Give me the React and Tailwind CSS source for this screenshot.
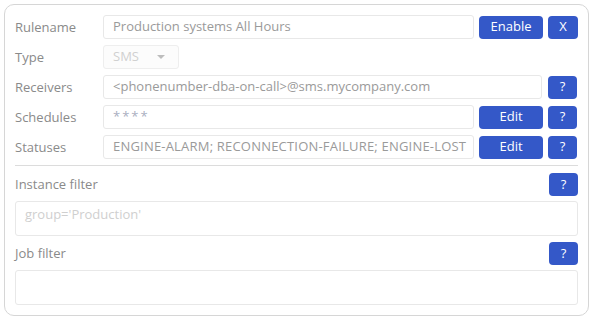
import React from "react";

const font = { fontFamily: '"Open Sans", "Liberation Sans", sans-serif' };

function Btn({ children, className = "" }) {
  return (
    <button
      className={
        "flex h-[23px] shrink-0 items-center justify-center rounded-[4px] bg-[#3458c8] text-[13px] text-white " +
        className
      }
    >
      {children}
    </button>
  );
}

function Input({ children, className = "" }) {
  return (
    <div
      className={
        "flex h-[24px] min-w-0 items-center overflow-hidden whitespace-nowrap rounded-[3px] border border-[#e8e8e8] px-[9px] text-[13px] text-[#9a9a9a] " +
        className
      }
    >
      {children}
    </div>
  );
}

function Label({ children }) {
  return <div className="w-[88px] shrink-0 pt-px text-[13px] text-[#8a8a8a]">{children}</div>;
}

export default function App() {
  return (
    <div className="h-[324px] w-[596px] bg-white p-[4px]" style={font}>
      <div className="w-[585px] rounded-[10px] border border-[#d6d6d6] p-[10px]">
        <div className="flex flex-col gap-[6px]">
          <div className="flex items-center">
            <Label>Rulename</Label>
            <Input className="w-[371px]">Production systems All Hours</Input>
            <Btn className="ml-[5px] w-[64px]">Enable</Btn>
            <Btn className="ml-[5px] w-[30px]">X</Btn>
          </div>
          <div className="flex items-center">
            <Label>Type</Label>
            <div className="flex h-[24px] w-[76px] items-center justify-between rounded-[3px] border border-[#eeeeee] bg-[#fcfcfc] pl-[9px] pr-[13px] text-[13px] text-[#d0d0d0]">
              <span>SMS</span>
              <span className="h-0 w-0 border-x-[4px] border-t-[4px] border-x-transparent border-t-[#bdbdbd]" />
            </div>
          </div>
          <div className="flex items-center">
            <Label>Receivers</Label>
            <Input className="w-[439px]">&lt;phonenumber-dba-on-call&gt;@sms.mycompany.com</Input>
            <Btn className="ml-[6px] w-[29px]">?</Btn>
          </div>
          <div className="flex items-center">
            <Label>Schedules</Label>
            <Input className="w-[371px] text-[11px] tracking-[2px] text-[#a9aec0]">****</Input>
            <Btn className="ml-[5px] w-[64px]">Edit</Btn>
            <Btn className="ml-[5px] w-[29px]">?</Btn>
          </div>
          <div className="flex items-center">
            <Label>Statuses</Label>
            <Input className="w-[371px] tracking-[0.2px]">ENGINE-ALARM; RECONNECTION-FAILURE; ENGINE-LOST</Input>
            <Btn className="ml-[5px] w-[64px]">Edit</Btn>
            <Btn className="ml-[5px] w-[29px]">?</Btn>
          </div>
        </div>
        <div className="mt-[6px] h-px w-[563px] bg-[#dcdcdc]" />
        <div className="mt-[7px] flex w-[563px] items-center justify-between">
          <div className="text-[13px] text-[#8a8a8a]">Instance filter</div>
          <Btn className="w-[29px]">?</Btn>
        </div>
        <div className="mt-[5px] h-[35px] w-[563px] rounded-[3px] border border-[#e8e8e8] px-[9px] pt-[3px] text-[13px] text-[#cfcfcf]">
          group='Production'
        </div>
        <div className="mt-[6px] flex w-[563px] items-center justify-between">
          <div className="text-[13px] text-[#8a8a8a]">Job filter</div>
          <Btn className="w-[29px]">?</Btn>
        </div>
        <div className="mt-[5px] h-[35px] w-[563px] rounded-[3px] border border-[#e8e8e8]" />
      </div>
    </div>
  );
}
